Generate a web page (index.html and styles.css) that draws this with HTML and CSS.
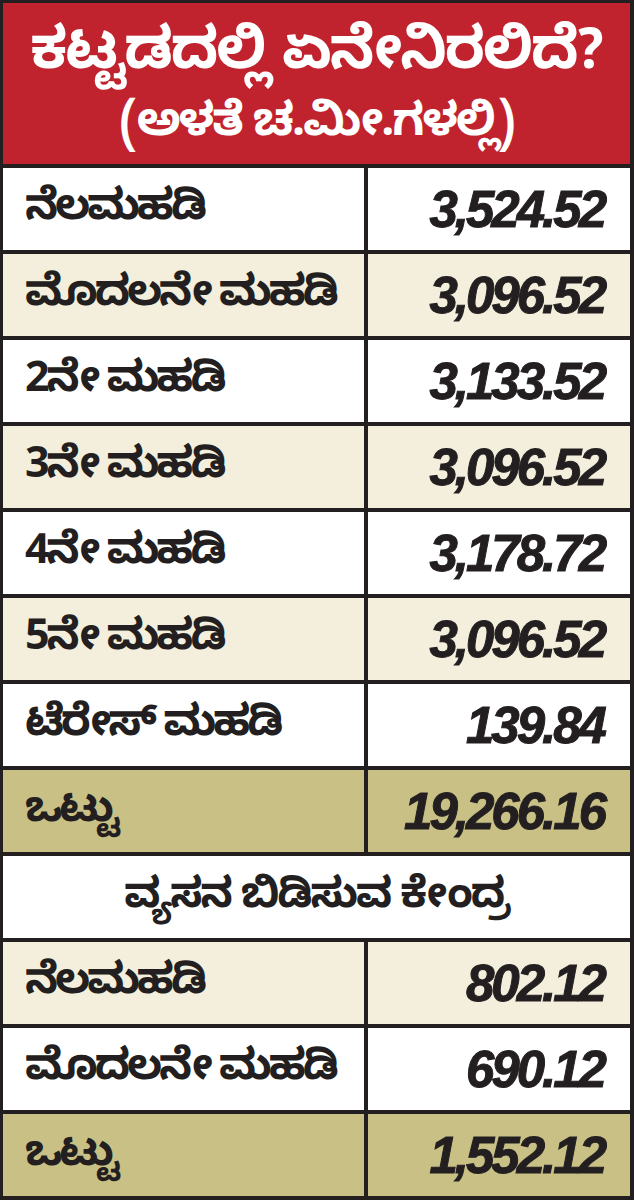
FILE: index.html
```html
<!DOCTYPE html>
<html lang="kn">
<head>
<meta charset="utf-8">
<title>ಕಟ್ಟಡದಲ್ಲಿ ಏನೇನಿರಲಿದೆ?</title>
<link rel="stylesheet" href="styles.css">
</head>
<body>
<div class="board">
  <div class="header">
    <div class="title">ಕಟ್ಟಡದಲ್ಲಿ ಏನೇನಿರಲಿದೆ?</div>
    <div class="subtitle">(ಅಳತೆ ಚ.ಮೀ.ಗಳಲ್ಲಿ)</div>
  </div>
  <div class="table">
    <div class="cell label">ನೆಲಮಹಡಿ</div><div class="cell num">3,524.52</div>
    <div class="cell label beige">ಮೊದಲನೇ ಮಹಡಿ</div><div class="cell num beige">3,096.52</div>
    <div class="cell label">2ನೇ ಮಹಡಿ</div><div class="cell num">3,133.52</div>
    <div class="cell label beige">3ನೇ ಮಹಡಿ</div><div class="cell num beige">3,096.52</div>
    <div class="cell label">4ನೇ ಮಹಡಿ</div><div class="cell num">3,178.72</div>
    <div class="cell label beige">5ನೇ ಮಹಡಿ</div><div class="cell num beige">3,096.52</div>
    <div class="cell label">ಟೆರೇಸ್ ಮಹಡಿ</div><div class="cell num">139.84</div>
    <div class="cell label total">ಒಟ್ಟು</div><div class="cell num total">19,266.16</div>
    <div class="cell section">ವ್ಯಸನ ಬಿಡಿಸುವ ಕೇಂದ್ರ</div>
    <div class="cell label beige">ನೆಲಮಹಡಿ</div><div class="cell num beige">802.12</div>
    <div class="cell label">ಮೊದಲನೇ ಮಹಡಿ</div><div class="cell num">690.12</div>
    <div class="cell label total">ಒಟ್ಟು</div><div class="cell num total">1,552.12</div>
  </div>
</div>
</body>
</html>
```
FILE: styles.css
```css
html, body {
  margin: 0;
  padding: 0;
  background: #ffffff;
}

.board {
  width: 634px;
  height: 1200px;
  box-sizing: border-box;
  border: 4px solid #231f20;
  border-top-width: 3px;
  border-left-width: 3px;
  display: flex;
  flex-direction: column;
  font-family: "Noto Sans Kannada", "Noto Sans", "Liberation Sans", sans-serif;
}

.header {
  height: 161px;
  box-sizing: border-box;
  padding-top: 22px;
  background: #c1232e;
  color: #ffffff;
  display: flex;
  flex-direction: column;
  align-items: center;
  font-weight: 700;
  overflow: hidden;
}

.title {
  font-size: 58px;
  line-height: 70px;
  letter-spacing: -2px;
}

.subtitle {
  font-size: 46px;
  line-height: 56px;
  letter-spacing: -2px;
  margin-top: 6px;
}

.table {
  flex: 1;
  display: grid;
  grid-template-columns: 365px 1fr;
  grid-auto-rows: 1fr;
}

.cell {
  border-top: 4px solid #231f20;
  display: flex;
  align-items: center;
  color: #231f20;
  background: #ffffff;
  box-sizing: border-box;
}

.label {
  border-right: 4px solid #231f20;
  padding-left: 22px;
  padding-top: 8px;
  font-size: 43px;
  font-weight: 700;
  letter-spacing: -3px;
}

.num {
  justify-content: flex-end;
  padding-right: 26px;
  font-family: "Liberation Sans Narrow", "Liberation Sans", sans-serif;
  font-weight: 700;
  font-style: italic;
  font-size: 51px;
  letter-spacing: -3px;
  -webkit-text-stroke: 1px #231f20;
}

.section {
  grid-column: 1 / span 2;
  justify-content: center;
  padding-top: 8px;
  font-size: 42px;
  font-weight: 700;
  letter-spacing: -2px;
}

.beige {
  background: #f3efdc;
}

.total {
  background: #c9c086;
}
```
